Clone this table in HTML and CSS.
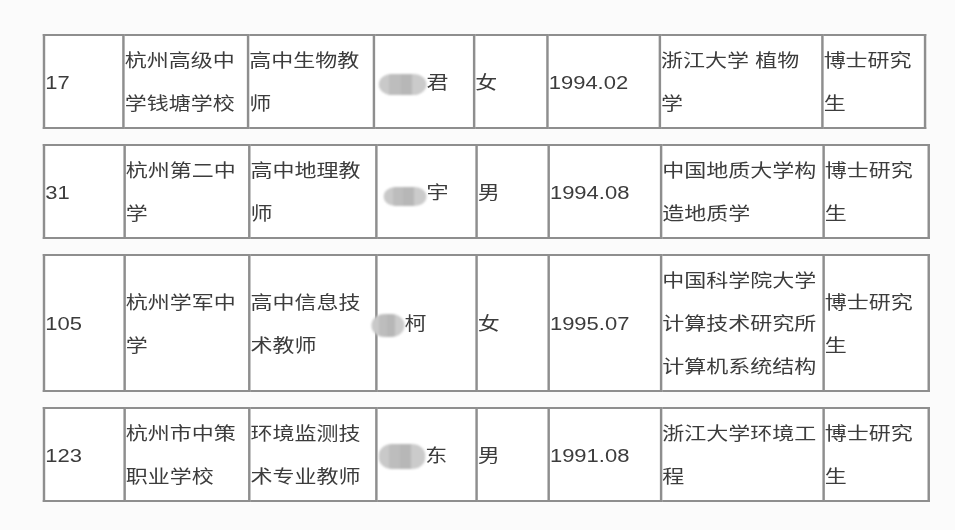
FILE: index.html
```
<!DOCTYPE html>
<html lang="zh-CN">
<head>
<meta charset="utf-8">
<title>杭州教师招聘名单</title>
<link rel="stylesheet" href="styles.css">
</head>
<body>
<div class="sheet">
  <table class="grid t1">
    <colgroup>
      <col class="c-no"><col class="c-school"><col class="c-post"><col class="c-name"><col class="c-sex"><col class="c-date"><col class="c-major"><col class="c-deg">
    </colgroup>
    <tr>
      <td>17</td>
      <td>杭州高级中学钱塘学校</td>
      <td>高中生物教师</td>
      <td class="name"><span class="blob b1"></span>君</td>
      <td>女</td>
      <td>1994.02</td>
      <td>浙江大学 植物学</td>
      <td>博士研究生</td>
    </tr>
  </table>
  <table class="grid">
    <colgroup>
      <col class="c-no"><col class="c-school"><col class="c-post"><col class="c-name"><col class="c-sex"><col class="c-date"><col class="c-major"><col class="c-deg">
    </colgroup>
    <tr>
      <td>31</td>
      <td>杭州第二中学</td>
      <td>高中地理教师</td>
      <td class="name"><span class="blob b2"></span>宇</td>
      <td>男</td>
      <td>1994.08</td>
      <td>中国地质大学构造地质学</td>
      <td>博士研究生</td>
    </tr>
  </table>
  <table class="grid">
    <colgroup>
      <col class="c-no"><col class="c-school"><col class="c-post"><col class="c-name"><col class="c-sex"><col class="c-date"><col class="c-major"><col class="c-deg">
    </colgroup>
    <tr>
      <td>105</td>
      <td>杭州学军中学</td>
      <td>高中信息技术教师</td>
      <td class="name"><span class="blob b3"></span>柯</td>
      <td>女</td>
      <td>1995.07</td>
      <td>中国科学院大学计算技术研究所计算机系统结构</td>
      <td>博士研究生</td>
    </tr>
  </table>
  <table class="grid">
    <colgroup>
      <col class="c-no"><col class="c-school"><col class="c-post"><col class="c-name"><col class="c-sex"><col class="c-date"><col class="c-major"><col class="c-deg">
    </colgroup>
    <tr>
      <td>123</td>
      <td>杭州市中策职业学校</td>
      <td>环境监测技术专业教师</td>
      <td class="name"><span class="blob b4"></span>东</td>
      <td>男</td>
      <td>1991.08</td>
      <td>浙江大学环境工程</td>
      <td>博士研究生</td>
    </tr>
  </table>
</div>
</body>
</html>
```
FILE: styles.css
```
html, body {
  margin: 0;
  padding: 0;
  background: #fbfbfb;
}

body {
  width: 955px;
  height: 530px;
  overflow: hidden;
}

.sheet {
  width: 782px;
  padding: 34px 0 0 35px;
  transform: scaleX(1.222);
  transform-origin: 0 0;
  font-family: "Liberation Sans", "Noto Sans CJK SC", sans-serif;
  font-size: 18px;
  line-height: 43px;
  color: #3c3c3c;
  filter: blur(0.35px);
}

.grid {
  border-collapse: collapse;
  table-layout: fixed;
  width: 724px;
  background: #ffffff;
  margin-bottom: 15px;
}

.grid td {
  border: 2px solid #8e8e8e;
  padding: 4px 2px 1px 0;
  vertical-align: middle;
  text-align: left;
  word-break: break-all;
}

.c-no { width: 66px; }
.c-school { width: 102px; }
.c-post { width: 104px; }
.c-name { width: 82px; }
.c-sex { width: 59px; }
.c-date { width: 92px; }
.c-major { width: 133px; }
.c-deg { width: 86px; }

.t1 { width: 721px; }
.t1 .c-no { width: 65px; }
.t1 .c-post { width: 103px; }
.t1 .c-sex { width: 60px; }
.t1 .c-deg { width: 84px; }

.name {
  white-space: nowrap;
}

.blob {
  display: inline-block;
  vertical-align: middle;
  border-radius: 11px;
  background: linear-gradient(90deg, #c9c9c9 0 22%, #bdbdbd 22% 46%, #b7b7b7 46% 70%, #cbcbcb 70% 100%);
  filter: blur(0.8px);
}

.b1 { width: 39px; height: 21px; margin-left: 3px; margin-top: 2px; }
.b2 { width: 35px; height: 19px; margin-top: 5px; margin-left: 5px; }
.b3 { width: 27px; height: 23px; margin-left: -5px; }
.b4 { width: 38px; height: 25px; margin-left: 1px; }
```
